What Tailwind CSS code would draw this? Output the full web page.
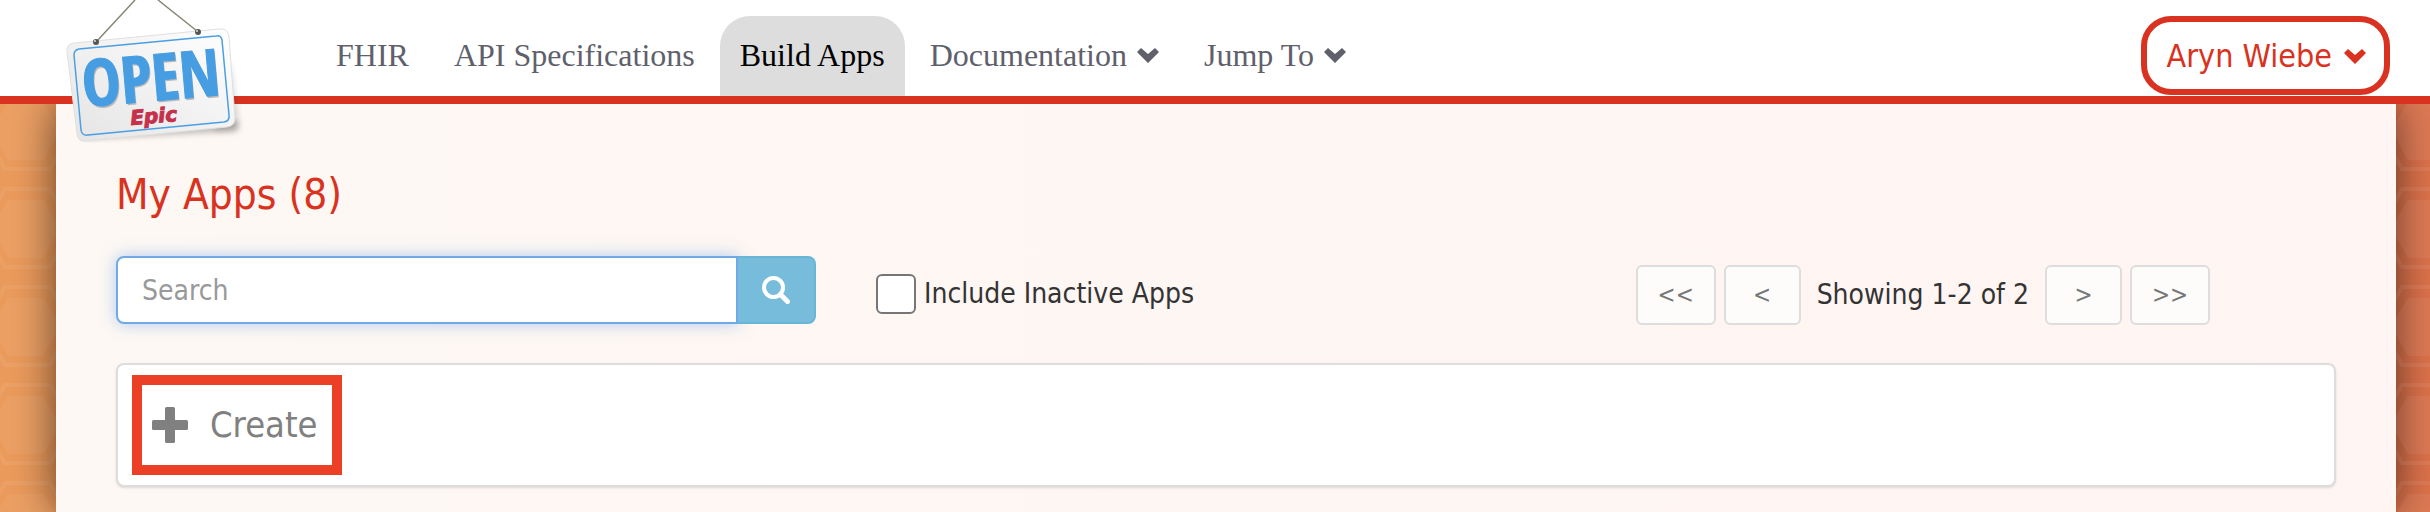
<!DOCTYPE html>
<html lang="en">
<head>
  <meta charset="UTF-8" />
  <meta name="viewport" content="width=device-width, initial-scale=1" />
  <title>Build Apps</title>
  <script src="https://cdn.jsdelivr.net/npm/@tailwindcss/browser@4"></script>
</head>
<body class="min-h-screen flex flex-col bg-linear-to-r from-[#eb9b5c] to-[#de734c] font-['DejaVu_Sans_Condensed','DejaVu_Sans',sans-serif] text-[#333]">
  <header class="relative z-10 flex items-end justify-between bg-white border-b-8 border-[#d93220] pl-[316px] pr-10 h-26">
    <a href="#" class="absolute left-16 top-0" aria-label="Open Epic">
      <svg class="w-45 h-37" viewBox="0 0 180 148">
        <defs>
          <linearGradient id="board" x1="0" y1="1" x2="1" y2="0">
            <stop offset="0" stop-color="#e4e4e4" />
            <stop offset="1" stop-color="#ffffff" />
          </linearGradient>
          <filter id="soft" x="-10%" y="-10%" width="130%" height="130%"><feGaussianBlur stdDeviation="3" /></filter>
        </defs>
        <path d="M18 132 L172 120 Q177 126 173 131 L20 139 Z" fill="#000" opacity=".25" filter="url(#soft)" />
        <path d="M166 60 L174 118 Q175 128 166 130 L150 131 Z" fill="#000" opacity=".15" filter="url(#soft)" />
        <path d="M10 43 L155 29 Q164 28 165 37 L171 118 Q171 126 163 127 L22 141 Q14 142 13 134 L3 52 Q2 44 10 43 Z" fill="url(#board)" stroke="#e0e0e0" />
        <path d="M15 49 L152 36 Q157 35 158 40 L165 115 Q166 121 160 122 L24 135 Q18 136 17 130 L10 55 Q10 50 15 49 Z" fill="none" stroke="#4a9fe3" stroke-width="1.5" />
        <path d="M33 41 L71 0 M94 0 L133 31" fill="none" stroke="#8a8674" stroke-width="1.5" />
        <circle cx="32" cy="42" r="3" fill="#555" /><circle cx="31" cy="41" r="1" fill="#ddd" />
        <circle cx="134" cy="32" r="3" fill="#555" /><circle cx="133" cy="31" r="1" fill="#ddd" />
        <g transform="rotate(-5 20 107)" font-family="'Open Sans Condensed','Roboto Condensed','Liberation Sans Narrow','Liberation Sans',sans-serif" font-weight="700" font-size="65">
          <text x="21" y="109" fill="#b9b9b9">OPEN</text>
          <text x="20" y="107" fill="#469de2" stroke="#469de2">OPEN</text>
        </g>
        <text x="67" y="125" transform="rotate(-5 67 125)" font-family="'DejaVu Sans',sans-serif" font-weight="700" font-style="italic" font-size="20" fill="#c5304b" stroke="#c5304b">Epic</text>
      </svg>
    </a>
    <nav class="flex gap-[5px] font-['Liberation_Serif',serif] text-[32px] leading-10 text-[#60606c]">
      <a href="#" class="px-5 pt-[19px] pb-[21px]">FHIR</a>
      <a href="#" class="px-5 pt-[19px] pb-[21px]">API Specifications</a>
      <a href="#" class="px-5 pt-[19px] pb-[21px] rounded-t-[30px] bg-[#ddd] text-black">Build Apps</a>
      <a href="#" class="px-5 pt-[19px] pb-[21px] flex items-center gap-2.5">Documentation
        <svg class="w-[22px] h-4" viewBox="0 0 22 16" fill="currentColor"><path d="M0 5 L4 1 L11 7 L18 1 L22 5 L11 16 Z" /></svg>
      </a>
      <a href="#" class="px-5 pt-[19px] pb-[21px] flex items-center gap-2.5">Jump To
        <svg class="w-[22px] h-4" viewBox="0 0 22 16" fill="currentColor"><path d="M0 5 L4 1 L11 7 L18 1 L22 5 L11 16 Z" /></svg>
      </a>
    </nav>
    <button type="button" class="mb-px flex items-center gap-3 border-6 border-[#d93220] rounded-[30px] pl-5 pr-[18px] h-[79px] text-[32px] leading-10 text-[#d93220]">Aryn Wiebe
      <svg class="w-[22px] h-4" viewBox="0 0 22 16" fill="currentColor"><path d="M0 5 L4 1 L11 7 L18 1 L22 5 L11 16 Z" /></svg>
    </button>
  </header>

  <div class="grow grid grid-cols-[56px_1fr_34px]">
    <svg class="w-full h-full">
      <defs>
        <!-- honeycomb tile -->
        <pattern id="comb" width="170" height="98" patternUnits="userSpaceOnUse" y="81">
          <path d="M5 4 H50 L72 43 L50 82 H5 L-17 43 Z" fill="none" stroke="#fff" stroke-opacity=".06" stroke-width="4" />
          <path d="M8 15 H43 L60 43 L43 73 H8 L-9 43 Z" fill="#fff" fill-opacity=".05" />
        </pattern>
      </defs>
      <rect width="100%" height="100%" fill="url(#comb)" />
    </svg>
    <main class="bg-linear-to-r from-[#fdf8f4] via-[#fef6f2] to-[#fff5f3] shadow-[0_0_40px_rgba(0,0,0,0.6)] px-15 pt-[67px] pb-6">
      <h1 class="text-[42px] leading-12 text-[#d93220]">My Apps (8)</h1>
      <div class="mt-9 flex items-center">
        <form class="flex w-[700px] h-[68px]">
          <input type="text" aria-label="Search" placeholder="Search" class="grow min-w-0 bg-white border-2 border-[#70a9e6] rounded-l-lg px-6 pt-0.5 text-[28px] placeholder-[#999] shadow-[0_0_16px_rgba(102,160,233,0.5)]">
          <button type="submit" aria-label="Search" class="w-[78px] flex items-center justify-center bg-[#77bddb] border-2 border-l-0 border-[#68b5d6] rounded-r-lg">
            <svg class="w-7 h-7" viewBox="0 0 28 28" fill="none" stroke="#fff"><circle cx="11.500" cy="11.500" r="9.500" stroke-width="4" /><path d="M18.500 18.500 L25.500 25.500" stroke-width="5" stroke-linecap="round" /></svg>
          </button>
        </form>
        <label class="ml-15 mt-2 flex items-center gap-2 text-[28px] leading-10">
          <input type="checkbox" class="appearance-none w-10 h-10 bg-white border-2 border-[#767676] rounded-md">
          Include Inactive Apps
        </label>
        <div class="ml-auto mr-[126px] mt-2.5 flex items-center gap-2 text-[28px] leading-10">
          <button type="button" class="w-20 h-15 bg-[#fdfcfa] border-2 border-[#ddd] rounded-md text-2xl text-[#777]">&lt;&lt;</button>
          <button type="button" class="w-[77px] h-15 bg-[#fdfcfa] border-2 border-[#ddd] rounded-md text-2xl text-[#777]">&lt;</button>
          <span class="px-2">Showing 1-2 of 2</span>
          <button type="button" class="w-[77px] h-15 bg-[#fdfcfa] border-2 border-[#ddd] rounded-md text-2xl text-[#777]">&gt;</button>
          <button type="button" class="w-20 h-15 bg-[#fdfcfa] border-2 border-[#ddd] rounded-md text-2xl text-[#777]">&gt;&gt;</button>
        </div>
      </div>
      <section class="mt-[38px] bg-white border-2 border-[#ddd] rounded-lg shadow-sm px-3.5 py-2.5">
        <button type="button" class="flex items-center gap-[22px] w-[210px] h-25 border-10 border-[#eb4026] px-2.5 text-[36px] text-[#808080]">
          <svg class="w-9 h-9 shrink-0" viewBox="0 0 36 36" fill="currentColor"><rect x="13" width="10" height="36" rx="1.500" /><rect y="13" width="36" height="10" rx="1.500" /></svg>
          Create
        </button>
      </section>
    </main>
    <svg class="w-full h-full">
      <defs>
        <pattern id="comb-right" width="170" height="98" patternUnits="userSpaceOnUse" y="81">
          <path d="M100 4 H6 L-16 43 L6 82 H100" fill="none" stroke="#fff" stroke-opacity=".06" stroke-width="4" />
          <path d="M12 15 H100 V73 H12 L-5 43 Z" fill="#fff" fill-opacity=".05" />
        </pattern>
      </defs>
      <rect width="100%" height="100%" fill="url(#comb-right)" />
    </svg>
  </div>
</body>
</html>
